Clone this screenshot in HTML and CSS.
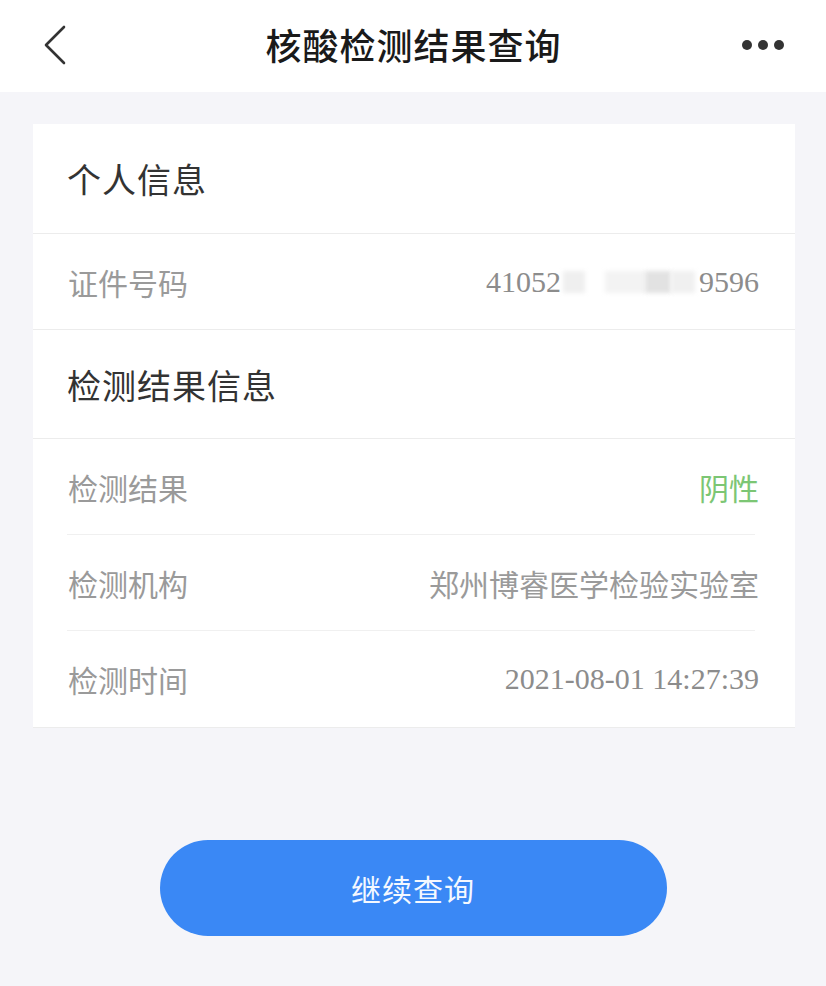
FILE: index.html
```html
<!DOCTYPE html>
<html lang="zh-CN">
<head>
<meta charset="utf-8">
<title>核酸检测结果查询</title>
<link rel="stylesheet" href="styles.css">
</head>
<body>
<header class="nav">
  <span class="nav-back">
    <svg width="26" height="40" viewBox="0 0 26 40"><path d="M22 2 L4 20 L22 38" fill="none" stroke="#333" stroke-width="2.6" stroke-linecap="round" stroke-linejoin="round"/></svg>
  </span>
  <h1 class="nav-title">核酸检测结果查询</h1>
  <span class="nav-more"><i></i><i></i><i></i></span>
</header>
<main class="content">
  <section class="card">
    <div class="sec-title">个人信息</div>
    <div class="row">
      <span class="label">证件号码</span>
      <span class="value num">41052<span class="mask"><b class="m1"></b><b class="m2"></b><b class="m3"></b><b class="m4"></b></span>9596</span>
    </div>
    <div class="sec-title sec-second">检测结果信息</div>
    <div class="row tall inset">
      <span class="label">检测结果</span>
      <span class="value green">阴性</span>
    </div>
    <div class="row tall inset">
      <span class="label">检测机构</span>
      <span class="value">郑州博睿医学检验实验室</span>
    </div>
    <div class="row tall">
      <span class="label">检测时间</span>
      <span class="value num">2021-08-01 14:27:39</span>
    </div>
  </section>
  <div class="btn-wrap">
    <button class="btn">继续查询</button>
  </div>
</main>
</body>
</html>
```

FILE: styles.css
```css
* { box-sizing: border-box; }
html, body { margin: 0; padding: 0; }
body {
  width: 826px;
  height: 986px;
  background: #f5f5f9;
  font-family: "Noto Sans CJK SC", "Noto Sans", sans-serif;
  overflow: hidden;
}
.nav {
  height: 92px;
  background: #ffffff;
  display: flex;
  align-items: center;
  justify-content: space-between;
  padding: 0 40px 0 40px;
}
.nav-back { display: flex; width: 60px; height: 40px; margin-top: -2px; padding-left: 2px; }
.nav-title {
  margin: 0;
  font-size: 36px;
  font-weight: 500;
  color: #1a1a1a;
  letter-spacing: 1px;
  margin-top: -4px;
  padding-left: 1px;
}
.nav-more { display: flex; justify-content: flex-end; gap: 6px; width: 60px; margin-top: -2px; padding-right: 2px; }
.nav-more i {
  display: block;
  width: 10px; height: 10px;
  border-radius: 50%;
  background: #333;
}
.content { padding-top: 32px; }
.card {
  margin: 0 31px 0 33px;
  background: #fff;
  border-bottom: 1px solid #ececec;
}
.sec-title {
  height: 110px;
  display: flex;
  align-items: center;
  padding-left: 34px;
  font-size: 34px;
  color: #333;
  letter-spacing: 1px;
  border-bottom: 1px solid #ececec;
}
.sec-second { border-top: 1px solid #ececec; }
.row {
  height: 95px;
  display: flex;
  align-items: center;
  justify-content: space-between;
  padding: 0 36px 0 35px;
  position: relative;
}
.row.tall { height: 96px; }
.row.inset::after {
  content: "";
  position: absolute;
  left: 34px; right: 40px; bottom: 0;
  height: 1px;
  background: #f0f0f0;
}
.label { font-size: 30px; color: #9a9a9a; }
.value { font-size: 30px; color: #9a9a9a; display: flex; align-items: center; }
.value.num { font-family: "Liberation Serif", "Times New Roman", serif; color: #8c8c8c; }
.value.green { color: #7cc674; }
.mask {
  display: inline-flex;
  align-items: center;
  width: 138px;
  height: 30px;
}
.mask b {
  display: block;
  height: 22px;
  background: #ececec;
  filter: blur(2px);
}
.mask .m1 { width: 22px; margin-left: 2px; background: #efefef; }
.mask .m2 { width: 40px; margin-left: 20px; background: #f3f3f3; }
.mask .m3 { width: 26px; background: #e2e2e2; }
.mask .m4 { width: 24px; background: #f0f0f0; }
.btn-wrap { display: flex; justify-content: center; padding-top: 112px; }
.btn {
  width: 507px;
  height: 96px;
  border: 0;
  border-radius: 48px;
  background: #3a88f5;
  color: #f4f8ff;
  font-family: "Noto Sans CJK SC", sans-serif;
  font-size: 30px;
  letter-spacing: 1px;
}
```
